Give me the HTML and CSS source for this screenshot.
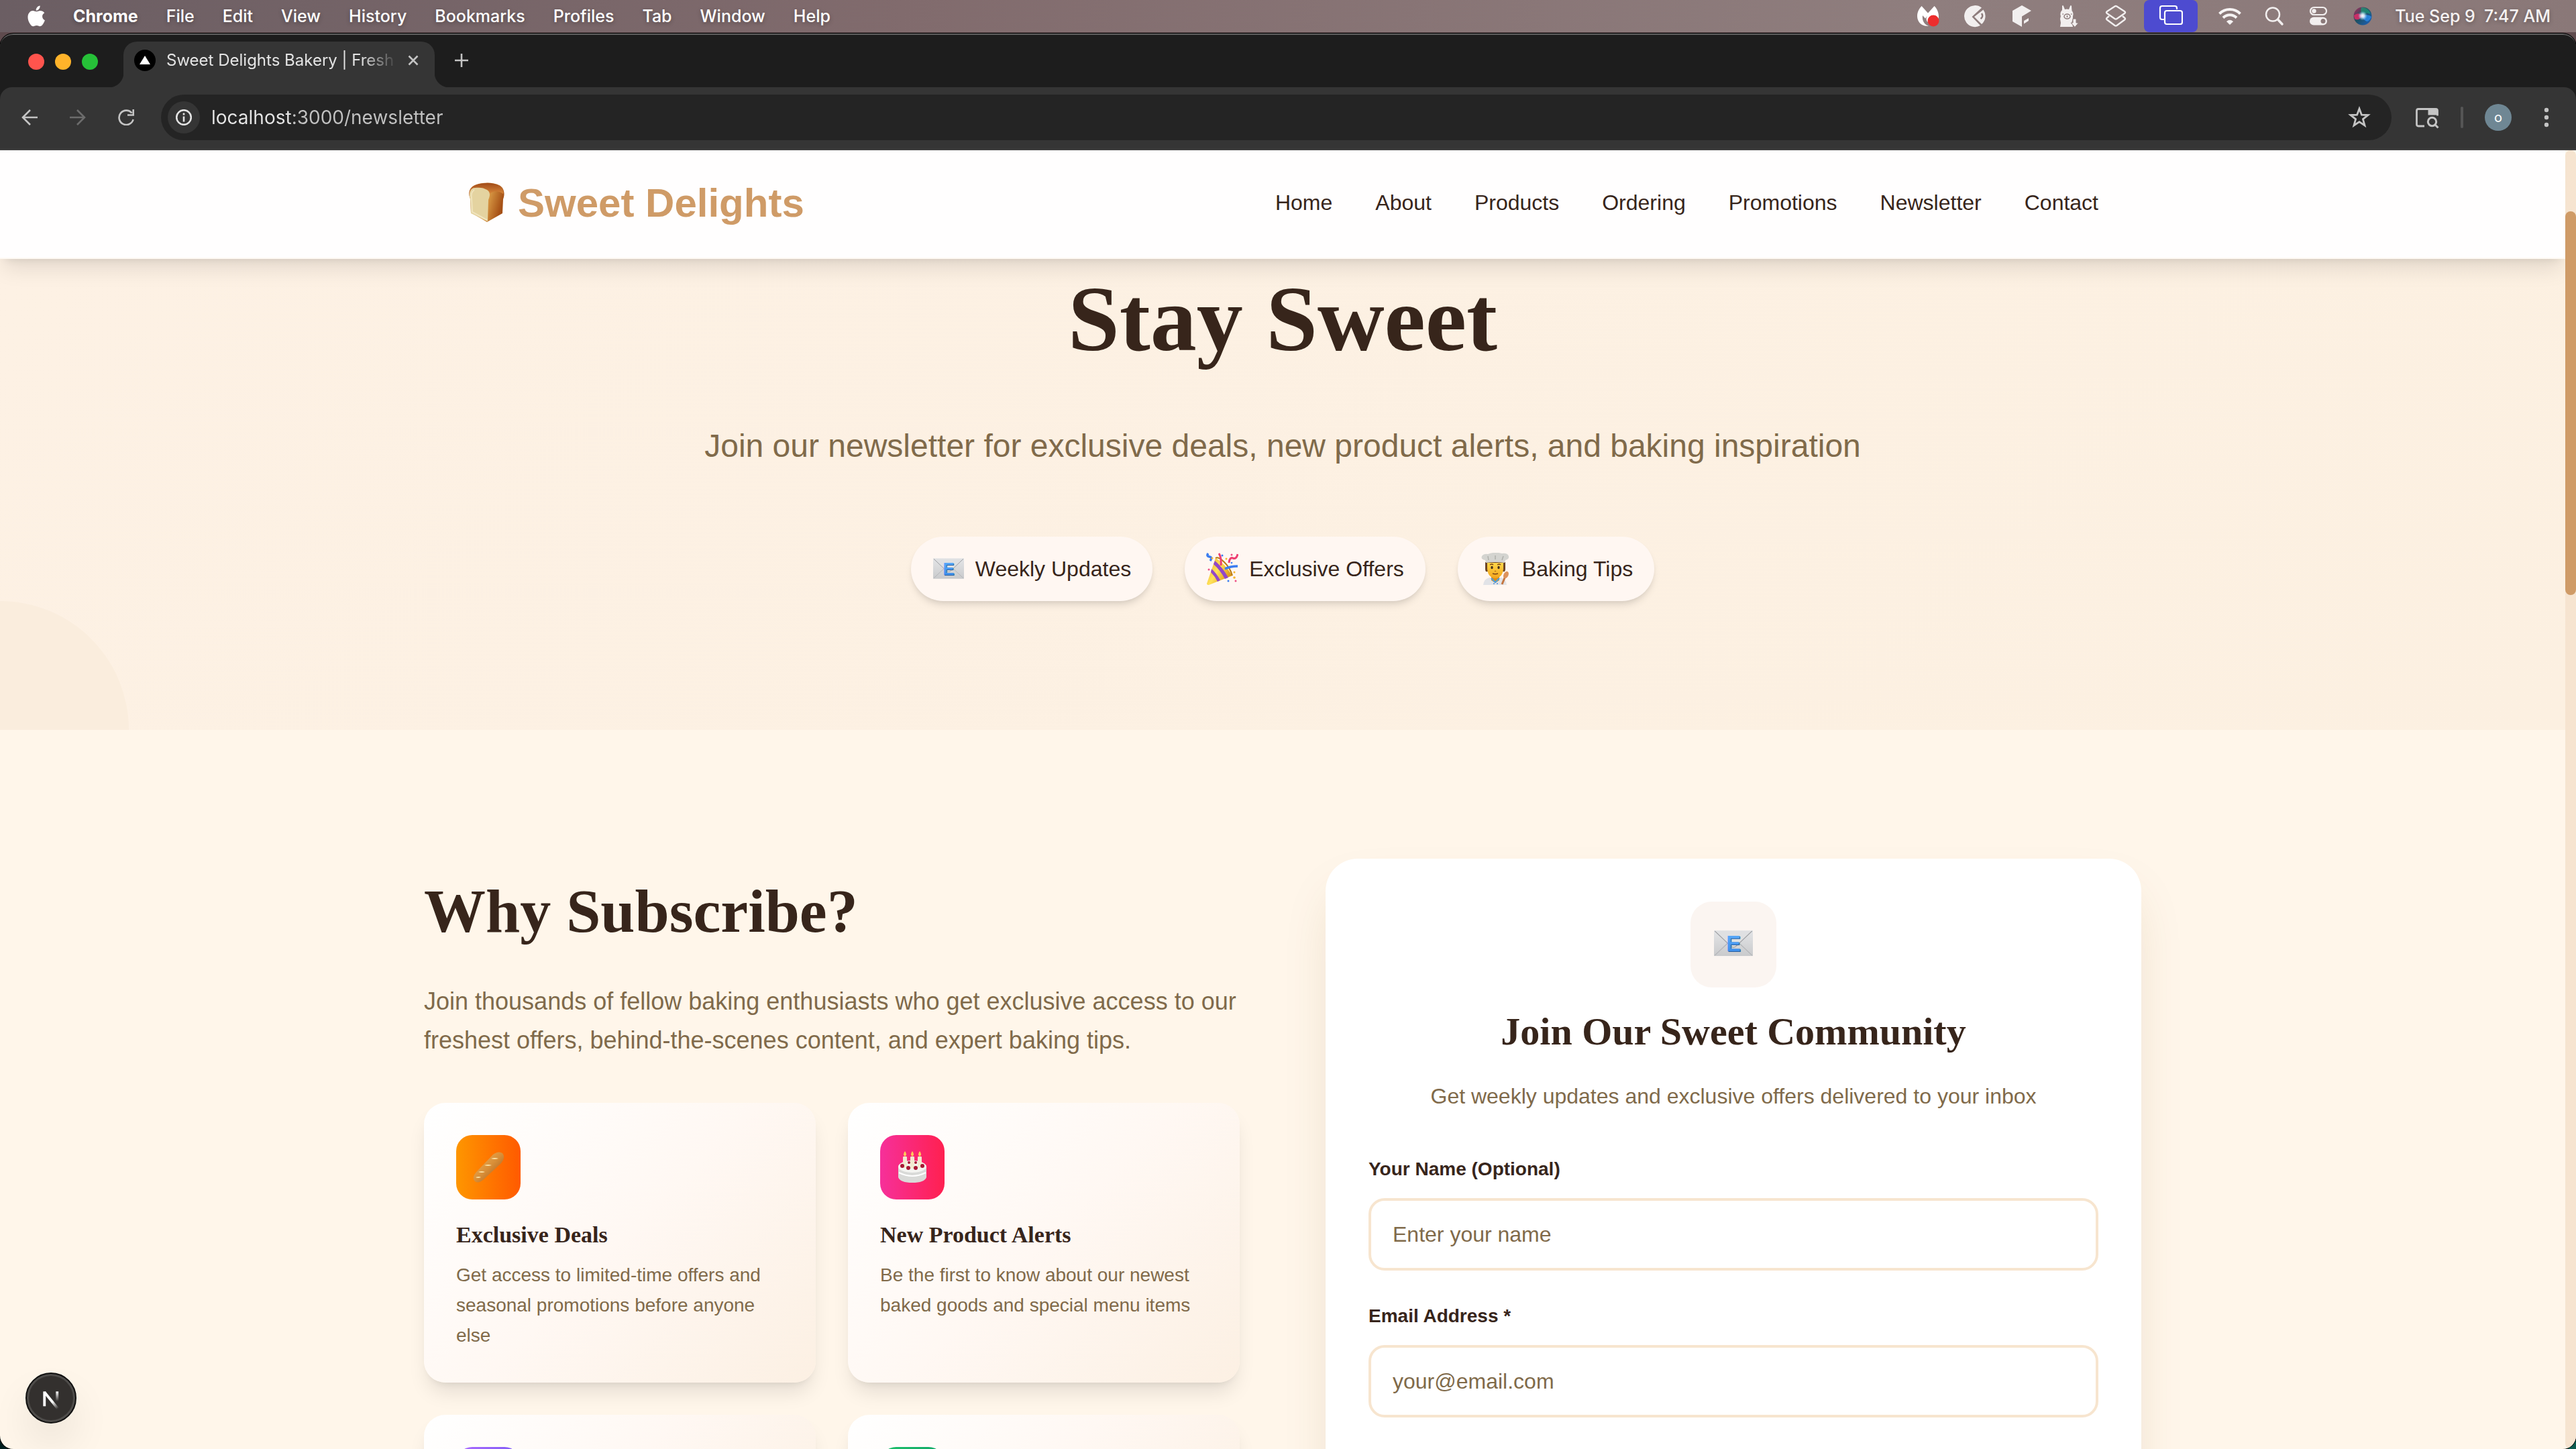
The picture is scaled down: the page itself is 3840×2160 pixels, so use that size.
FILE: index.html
```html
<!DOCTYPE html>
<html lang="en">
<head>
<meta charset="utf-8">
<meta name="viewport" content="width=device-width, initial-scale=1">
<title>Sweet Delights Bakery</title>
<link rel="stylesheet" href="styles.css">
</head>
<body>
<svg class="sprite" aria-hidden="true">
  <defs>
    <linearGradient id="env-paper" x1="0" y1="0" x2="0" y2="1"><stop offset="0" stop-color="#e4e5e7"/><stop offset="1" stop-color="#c9cacc"/></linearGradient>
    <linearGradient id="env-letter" x1="0" y1="0" x2="0" y2="1"><stop offset="0" stop-color="#5eaefc"/><stop offset="1" stop-color="#3787e6"/></linearGradient>
    <symbol id="email" viewBox="0 0 48 32">
      <rect width="48" height="32" rx="1" fill="url(#env-paper)"/>
      <path d="M1 31 18 15M47 31 30 15" stroke="#b4b5b8" fill="none"/>
      <path d="M1 1 20 19q4 4 8 0L47 1" stroke="#9c9da1" fill="#dfe0e2"/>
      <text x="16" y="27" class="email-letter email-letter-shade">E</text>
      <text x="15" y="26" class="email-letter">E</text>
    </symbol>
  </defs>
</svg>

<header class="menubar">
  <nav class="menus" aria-label="Menu bar">
    <svg class="apple" viewBox="0 0 26 32" fill="#fff"><path d="M18.600.5c.3 2.200-.6 4-1.700 5.300-1.100 1.300-2.600 2-4.200 1.900-.2-2 .6-3.800 1.700-5C15.500 1.400 17.200.6 18.600.5zM25.300 11.200c-2.100 1.300-3.300 3-3.200 5.400.1 2.800 1.500 4.700 3.800 5.700-.6 1.900-1.500 3.800-2.700 5.500-1.200 1.800-2.600 3.400-4.700 3.400-1.900 0-2.600-1.200-4.900-1.200s-3.100 1.200-5 1.200c-2 0-3.600-1.800-4.900-3.800C.500 23.300-.9 15.700 2.200 11.400 3.600 9.200 5.800 8 8 8c2.200 0 3.600 1.300 5.400 1.300C15.200 9.300 16.300 8 19 8c2.300 0 4.700 1.200 6.300 3.200z"/></svg>
    <a href="#" class="menu app">Chrome</a>
    <a href="#" class="menu">File</a>
    <a href="#" class="menu">Edit</a>
    <a href="#" class="menu">View</a>
    <a href="#" class="menu">History</a>
    <a href="#" class="menu">Bookmarks</a>
    <a href="#" class="menu">Profiles</a>
    <a href="#" class="menu">Tab</a>
    <a href="#" class="menu">Window</a>
    <a href="#" class="menu">Help</a>
  </nav>
  <div class="status">
    <div class="status-apps">
      <svg class="status-icon" viewBox="0 0 36 36"><path fill="#fff" d="M8.500 3 18 13.500 27.500 3c4 4 6.500 9.500 6.500 15.500 0 3-1 6-2 8H17c-2-3-2-6 0-9l-3 4-4-4.500C9 24 12 31 19 32.500 9 34 2 27 2 18 2 12 5 6.500 8.500 3z"/><circle cx="26" cy="25" r="8.500" fill="#ec2d2d"/></svg>
      <svg class="status-icon" viewBox="0 0 36 36"><g fill="#f2efef"><path d="M28 5.600 13.500 19 26 32A16 16 0 1 1 28 5.600z"/><path d="M30.500 8.500a16 16 0 0 1-2.500 21.500L17 19z"/></g><path d="M28 14c2 3 1.500 6-1.500 8" fill="none" stroke="#8b7a7a" stroke-width="2.500"/></svg>
      <svg class="status-icon" viewBox="0 0 36 36" fill="#f2efef"><path d="M18 2 32 10 18 18.500V34L4 26V10z"/><path d="M21 25l7-4v4l-7 4.500z"/></svg>
      <svg class="status-icon" viewBox="0 0 36 36" fill="#f2efef"><path d="M8 9 8 3q1-2 2 0l2 5q3-1 6 0l2-5q1-2 2 0l.5 7q3 3 1.500 8 0 6-1.500 8L24 34H5l1-6-1-6 1-4q-2-5 2-9z"/><ellipse cx="15.500" cy="18.500" rx="4.500" ry="3.500" fill="none" stroke="#8b7a7a" stroke-width="1.500"/><path d="M15.500 17v3M8.500 15h1.500M21 15h1.500" stroke="#8b7a7a" stroke-width="1.500"/><path d="M24 22h5v6h3.500L27 34.500 21 28h3z" stroke="#8b7a7a" stroke-width="1"/></svg>
      <svg class="status-icon" viewBox="0 0 36 36" fill="none" stroke="#f2efef" stroke-width="2.500" stroke-linejoin="round"><path d="M16.500 3.500q1.500-1 3 0L31 11q2 1.500 0 3L19.500 22q-1.500 1-3 0L5 14q-2-1.500 0-3z"/><path d="M8 18 5 20.500q-2 1.500 0 3L16.500 32q1.500 1 3 0L31 23.500q2-1.500 0-3L28 18"/></svg>
      <span class="mirroring"><svg class="status-icon" viewBox="0 0 36 36" fill="none" stroke="#fff" stroke-width="2.200"><path d="M8 23H5q-3 0-3-3V6q0-3 3-3h19q3 0 3 3v2"/><rect x="9" y="10" width="26" height="20" rx="3"/></svg></span>
    </div>
    <div class="status-system">
      <svg class="status-icon" viewBox="0 0 36 36" fill="none" stroke="#f7f4f4" stroke-width="4"><path d="M2.500 14.500a22 22 0 0 1 31 0"/><path d="M8 20.500a14 14 0 0 1 20 0"/><path d="M18 30.500 13.500 26q4.500-3.500 9 0z" fill="#f7f4f4" stroke-width="1"/></svg>
      <svg class="status-icon" viewBox="0 0 36 36" fill="none" stroke="#f2efef" stroke-width="2.500" stroke-linecap="round"><circle cx="16" cy="15.500" r="10"/><path d="m23.500 23 6.500 7" stroke-width="3.500"/></svg>
      <svg class="status-icon" viewBox="0 0 36 36"><rect x="6" y="5" width="24" height="11" rx="5.500" fill="none" stroke="#f2efef" stroke-width="2.200"/><circle cx="11.500" cy="10.500" r="3.200" fill="#f2efef"/><rect x="5" y="19.500" width="26" height="12" rx="6" fill="#f2efef"/><circle cx="25" cy="25.500" r="3.500" fill="#8b7a7a"/></svg>
      <svg class="status-icon" viewBox="0 0 36 36"><defs><linearGradient id="siri-base" x1="0" y1="0" x2="1" y2="1"><stop offset="0" stop-color="#b8265b"/><stop offset=".45" stop-color="#1d5060"/><stop offset="1" stop-color="#1d62c4"/></linearGradient><radialGradient id="siri-glow"><stop offset="0" stop-color="#fff"/><stop offset=".4" stop-color="#e9f3ff" stop-opacity=".8"/><stop offset="1" stop-color="#8cf" stop-opacity="0"/></radialGradient></defs><circle cx="18" cy="18" r="13.500" fill="url(#siri-base)"/><path d="M18 5a13 13 0 0 1 12 10q-8-4-12 2-4-6-2-12z" fill="#1d9b78" opacity=".7"/><path d="M5 17q7-6 12 1-5 8-11 4z" fill="#ec2768" opacity=".8"/><path d="M18 18q8-4 13 1-3 7-7 7-5-2-6-8z" fill="#298bea" opacity=".8"/><circle cx="18" cy="17.500" r="7" fill="url(#siri-glow)"/></svg>
      <time class="clock">Tue Sep 9&nbsp; 7:47 AM</time>
    </div>
  </div>
</header>

<div class="window">
  <div class="tabstrip">
    <div class="lights"><button class="light close" aria-label="Close window"></button><button class="light minimize" aria-label="Minimize window"></button><button class="light maximize" aria-label="Zoom window"></button></div>
    <div class="tab">
      <svg class="favicon" viewBox="0 0 32 32"><circle cx="16" cy="16" r="16"/><path d="M16 9 24 22H8z" fill="#fff"/></svg>
      <span class="tab-title">Sweet Delights Bakery | Fresh</span>
      <button class="plain" aria-label="Close tab"><svg class="glyph" viewBox="0 0 24 24"><path d="m5.500 5.500 13 13m0-13-13 13"/></svg></button>
    </div>
    <button class="plain" aria-label="New tab"><svg class="glyph" viewBox="0 0 24 24"><path d="M12 2v20M2 12h20"/></svg></button>
  </div>
  <div class="toolbar">
    <div class="history">
      <button class="plain" aria-label="Back"><svg class="glyph" viewBox="0 0 24 24"><path d="M24 12H2M13 1 2 12l11 11"/></svg></button>
      <button class="plain dim" aria-label="Forward" disabled><svg class="glyph" viewBox="0 0 24 24"><path d="M0 12h22M11 1l11 11-11 11"/></svg></button>
      <button class="plain" aria-label="Reload"><svg class="glyph" viewBox="0 0 24 24"><path d="M20.500 5.500A10.700 10.700 0 1 0 22.600 15M22.700 0v8.500H14"/></svg></button>
    </div>
    <div class="omnibox">
      <button class="site-info" aria-label="Site information"><svg class="glyph" viewBox="0 0 24 24"><circle cx="12" cy="12" r="10.800"/><path d="M12 10.500v8M12 5.500v3"/></svg></button>
      <input class="url" type="text" value="localhost:3000/newsletter" aria-label="Address">
      <button class="plain" aria-label="Bookmark this page"><svg class="tool-icon" viewBox="0 0 36 36"><path d="M18 5 21.400 14.200 31 14.500 23.400 20.600 26 30 18 24.600 10 30 12.600 20.600 5 14.500 14.600 14.200z"/></svg></button>
    </div>
    <button class="plain" aria-label="Search tabs"><svg class="tool-icon" viewBox="0 0 36 36"><path d="M14 31H5q-2.500 0-2.500-2.500V8Q2.500 5.500 5 5.500h26q2.500 0 2.500 2.500v7.500"/><path d="M19.500 5h14v9.500h-14z" fill="currentColor" stroke="none"/><circle cx="25.500" cy="24.500" r="6.200" stroke-width="3"/><path d="m30 29 4.500 4.500" stroke-width="3"/></svg></button>
    <span class="divider"></span>
    <button class="avatar" aria-label="Profile">o</button>
    <button class="plain" aria-label="Browser menu"><svg class="tool-icon" viewBox="0 0 36 36"><g fill="currentColor" stroke="none"><circle cx="18" cy="7" r="3.200"/><circle cx="18" cy="18" r="3.200"/><circle cx="18" cy="29" r="3.200"/></g></svg></button>
  </div>

  <div class="viewport">
    <div class="page">
      <header class="site-header">
        <div class="container site-bar">
          <a class="logo" href="#">
            <svg class="bread" viewBox="0 0 54 60"><defs><linearGradient id="crust" x1="0" y1="0" x2="1" y2=".3"><stop offset="0" stop-color="#b55b1e"/><stop offset=".6" stop-color="#d99a45"/><stop offset="1" stop-color="#a65116"/></linearGradient><linearGradient id="top-crust" x1="0" y1="0" x2="0" y2="1"><stop offset="0" stop-color="#a04a18"/><stop offset="1" stop-color="#dc8b3c"/></linearGradient></defs><path d="M28 59 4 45 3 24C-1 16 2 7 10 4 22-1 38 0 46 4c8 4 9 13 6 21l-1 21z" fill="url(#crust)"/><path d="M3 18C2 9 7 4 14 3 28-1 40 1 47 5c5 3 6 8 5 12-7-5-15-5-21 1z" fill="url(#top-crust)"/><path d="M29 58 4 46 3 25C0 16 3 8 10 8c8-1 13 0 18 3 6 4 4 10 2 15z" fill="#e4d3a0"/><path d="M28 56 6 44 5 25q-2-10 4-14" stroke="#f0e4bd" stroke-width="2" fill="none"/></svg>
            Sweet Delights
          </a>
          <nav class="site-nav" aria-label="Main">
            <a href="#">Home</a><a href="#">About</a><a href="#">Products</a><a href="#">Ordering</a><a href="#">Promotions</a><a href="#">Newsletter</a><a href="#">Contact</a>
          </nav>
        </div>
      </header>

      <section class="hero">
        <h1>Stay Sweet</h1>
        <p>Join our newsletter for exclusive deals, new product alerts, and baking inspiration</p>
        <ul class="pills">
          <li><svg class="emoji" viewBox="0 0 48 48"><use href="#email" x="1" y="8" width="46" height="31"/></svg>Weekly Updates</li>
          <li><svg class="emoji" viewBox="0 0 48 48">
            <defs><linearGradient id="cone" x1="0" y1="0" x2="1" y2=".6"><stop offset="0" stop-color="#e9a81e"/><stop offset=".5" stop-color="#ffe25a"/><stop offset="1" stop-color="#d8900f"/></linearGradient></defs>
            <path d="M1 46 14 8q12 6 25 26L4 48q-3 0-3-2z" fill="url(#cone)"/>
            <path d="M11 17q10 9 17 22l5-2Q24 21 13 12zM7 29q6 6 10 14l4-2Q15 30 8 24z" fill="#9247c8"/>
            <path d="M14 8q4-3 13 6t12 20" fill="none" stroke="#b87a10" stroke-width="2"/>
            <path d="M3 1q-3 4 2 5t1 6M28 24q8-4 19-4" fill="none" stroke="#3b7df0" stroke-width="3.500"/>
            <path d="M19 1q4 6 3 18M47 2q-2 8-7 6t-6 7" fill="none" stroke="#ee3f72" stroke-width="3"/>
            <g fill="#ee4f86"><circle cx="38" cy="3" r="1.500"/><circle cx="44" cy="42" r="1.500"/><circle cx="4" cy="25" r="1.500"/></g><g fill="#f5b62f"><circle cx="30" cy="9" r="1.500"/><circle cx="42" cy="29" r="1.500"/><circle cx="42" cy="37" r="1.800"/><circle cx="9" cy="8" r="1.500"/></g><g fill="#3b7df0"><circle cx="24" cy="4" r="1.500"/><circle cx="33" cy="42" r="1.500"/><circle cx="38" cy="15" r="1.300"/></g>
          </svg>Exclusive Offers</li>
          <li><svg class="emoji" viewBox="0 0 48 48">
            <defs><linearGradient id="skin" x1="0" y1="0" x2="0" y2="1"><stop offset="0" stop-color="#ffd84a"/><stop offset="1" stop-color="#f3a51c"/></linearGradient></defs>
            <path d="M6 48q1-9 9-11h18q7 2 8 11z" fill="#e2e3e7"/><path d="M18 36h12v5l-6 4-6-4z" fill="#d98e1b"/><path d="m18 38 6 6 6-6" fill="none" stroke="#4b9fe3" stroke-width="2"/>
            <path d="M9 14h30v10q0 5-3 4H12q-3 1-3-4z" fill="#6d4526"/><path d="M12 15h24v9q-1 13-12 14Q13 37 12 24z" fill="url(#skin)"/>
            <path d="M10 15 9 11Q2 10 4 5q3-4 9-3 10-4 21-1 8-1 10 4 1 5-5 6l-1 4q-14-2-28 0z" fill="#d4d4d0"/><path d="M14 11 13 5m11 5V4m10 7 2-6" stroke="#b0b0ab" stroke-width="1.500"/>
            <g fill="#43301c"><ellipse cx="19" cy="22" rx="1.700" ry="2.300"/><ellipse cx="29" cy="22" rx="1.700" ry="2.300"/></g><path d="M16 18q3-2 5 0m6 0q3-2 5 0M20 31q4 1.500 8 0" fill="none" stroke="#7c4514" stroke-width="1.500"/><path d="M23 27q1 1 2 0" fill="none" stroke="#b9741b" stroke-width="1.500"/>
            <path d="m34 47 5-12" stroke="#c57640" stroke-width="3"/><ellipse cx="40" cy="33" rx="3.500" ry="5.500" fill="#dd935c" transform="rotate(25 40 33)"/><circle cx="22" cy="46" r="1" fill="#5b8fd0"/><circle cx="27" cy="46" r="1" fill="#5b8fd0"/>
          </svg>Baking Tips</li>
        </ul>
      </section>

      <section class="container subscribe">
        <div class="benefits">
          <h2>Why Subscribe?</h2>
          <p class="lead">Join thousands of fellow baking enthusiasts who get exclusive access to our freshest offers, behind-the-scenes content, and expert baking tips.</p>
          <div class="cards">
            <article class="card">
              <span class="badge orange"><svg class="emoji" viewBox="0 0 48 48"><defs><linearGradient id="loaf" x1="0" y1="0" x2="1" y2="1"><stop offset="0" stop-color="#f2b860"/><stop offset=".5" stop-color="#d98f38"/><stop offset="1" stop-color="#96501a"/></linearGradient></defs><path d="M3 44Q-1 38 8 29L31 5q8-6 14-2 5 6-2 15L17 42q-9 8-14 2z" fill="url(#loaf)"/><path d="M9 31q5-2 10 0-5 2-10 0zM18 21q6-2 11 0-6 2-11 0zM28 11q6-2 11 0-6 2-11 0zM5 39q5-2 8 0-5 2-8 0z" fill="#fbe0a3"/></svg></span>
              <h3>Exclusive Deals</h3>
              <p>Get access to limited-time offers and seasonal promotions before anyone else</p>
            </article>
            <article class="card">
              <span class="badge pink"><svg class="emoji" viewBox="0 0 48 48"><path d="M3 23v16q3 8 21 8t21-8V23z" fill="#d9dad8"/><ellipse cx="24" cy="23" rx="21" ry="9" fill="#f4f4f1"/><path d="M4 32q20 10 40 0" stroke="#fff" stroke-width="2" fill="none"/><g fill="#f1ead0"><rect x="10" y="8" width="6" height="17" rx="1"/><rect x="21" y="8" width="6" height="18" rx="1"/><rect x="32" y="8" width="6" height="17" rx="1"/></g><g fill="#a81834"><circle cx="9" cy="22" r="3"/><circle cx="18" cy="25" r="3"/><circle cx="29" cy="25" r="3"/><circle cx="39" cy="22" r="3"/><circle cx="19" cy="17" r="2"/><circle cx="29" cy="17" r="2"/></g><g fill="#ffc95a"><path d="M13 0q4 5 0 8-4-3 0-8zM24 0q4 5 0 8-4-3 0-8zM35 0q4 5 0 8-4-3 0-8z"/></g></svg></span>
              <h3>New Product Alerts</h3>
              <p>Be the first to know about our newest baked goods and special menu items</p>
            </article>
            <article class="card"><span class="badge violet"></span></article>
            <article class="card"><span class="badge green"></span></article>
          </div>
        </div>

        <form class="signup">
          <span class="signup-icon"><svg class="signup-email" viewBox="0 0 48 32"><use href="#email" width="48" height="32"/></svg></span>
          <h2>Join Our Sweet Community</h2>
          <p>Get weekly updates and exclusive offers delivered to your inbox</p>
          <div class="field"><label for="name">Your Name (Optional)</label><input id="name" type="text" placeholder="Enter your name"></div>
          <div class="field"><label for="email-field">Email Address *</label><input id="email-field" type="email" placeholder="your@email.com"></div>
        </form>
      </section>
    </div>
    <div class="scrollbar"><span class="thumb"></span></div>
    <button class="devtools" aria-label="Open Next.js Dev Tools"><svg viewBox="0 0 74 74"><defs><linearGradient id="n-diag" gradientUnits="userSpaceOnUse" x1="40" y1="42" x2="48" y2="53"><stop offset="0" stop-color="#fff"/><stop offset="1" stop-color="#fff" stop-opacity="0"/></linearGradient><linearGradient id="n-bar" gradientUnits="userSpaceOnUse" x1="0" y1="27" x2="0" y2="42"><stop offset="0" stop-color="#fff"/><stop offset="1" stop-color="#fff" stop-opacity="0"/></linearGradient></defs><path d="M27 49.500V27" stroke="#fff" stroke-width="4"/><path d="M27 28 48 54" stroke="url(#n-diag)" stroke-width="4"/><rect x="44.500" y="27" width="4" height="16" fill="url(#n-bar)"/></svg></button>
  </div>
</div>
</body>
</html>
```

FILE: styles.css
```css
:root {
  --ink: #37251b;
  --muted: #806a4a;
  --caramel: #cf9b67;
  --cream: #fff6ea;
  --blush: #fff7f2;
  --sand: #f6e4d0;
  --chrome: #353535;
  --sans: "Liberation Sans", Arial, sans-serif;
  --serif: "Liberation Serif", "Times New Roman", serif;
  --ui: Inter, sans-serif;
}

* { box-sizing: border-box; }
h1, h2, h3, p, ul { margin: 0; padding: 0; }
a { color: inherit; text-decoration: none; }
button, input { font: inherit; color: inherit; border: 0; margin: 0; padding: 0; background: none; }
svg { display: block; flex: none; }

body {
  margin: 0;
  height: 100vh;
  overflow: hidden;
  display: flex;
  flex-direction: column;
  font-family: var(--sans);
  color: var(--ink);
  background: linear-gradient(#5f4b4e, #5f4b4e) top / 100% 80px no-repeat, linear-gradient(90deg, #001f1f, #0c5c50);
}
.sprite { position: absolute; width: 0; height: 0; }
.email-letter { font: bold 27px var(--sans); fill: url(#env-letter); }
.email-letter-shade { fill: #2a5f9e; }

/* System menu bar */
.menubar {
  flex: none;
  height: 48px;
  padding: 0 38px 0 41px;
  display: flex;
  align-items: center;
  justify-content: space-between;
  background: linear-gradient(90deg, #6b5e63, #816b6d 35%, #8f7e7e 75%, #8a7878);
  font: 500 25px/48px var(--ui);
  color: #fff;
  text-shadow: 0 2px 6px rgb(0 0 0 / .3);
}
.menus, .status, .status-apps, .status-system { display: flex; align-items: center; }
.menus { gap: 42px; }
.apple { width: 26px; height: 32px; }
.app { font-weight: 700; }
.status { gap: 30px; color: #f5f2f2; }
.status-apps { gap: 34px; }
.status-system { gap: 30px; }
.status-icon { width: 36px; height: 36px; }
.mirroring {
  width: 80px;
  height: 48px;
  margin-left: -10px;
  display: grid;
  place-items: center;
  border-radius: 8px;
  background: #4d4bd0;
}

/* Browser window */
.window {
  flex: 1;
  min-height: 0;
  margin-top: 2px;
  display: flex;
  flex-direction: column;
  border-radius: 20px;
  overflow: hidden;
  background: #1d1d1d;
  box-shadow: 0 0 0 1px #000;
}
.plain { display: grid; place-items: center; color: #c4c4c4; }
.glyph { width: 24px; height: 24px; fill: none; stroke: currentColor; stroke-width: 2.600; }
.tool-icon { width: 36px; height: 36px; fill: none; stroke: currentColor; stroke-width: 2.800; }
.dim { color: #6c6c6c; }

.tabstrip {
  flex: none;
  height: 80px;
  padding: 10px 0 0 42px;
  display: flex;
  align-items: center;
  border-top: 2px solid #5e5e5e;
  border-radius: 20px 20px 0 0;
}
.lights { display: flex; gap: 16px; margin: -8px 38px 0 0; }
.light { width: 24px; height: 24px; border-radius: 50%; }
.close { background: #ff544d; }
.minimize { background: #ffb32a; }
.maximize { background: #26c138; }
.tab {
  position: relative;
  align-self: stretch;
  width: 464px;
  margin-right: 28px;
  padding: 0 20px 12px 16px;
  display: flex;
  align-items: center;
  border-radius: 20px 20px 0 0;
  background: var(--chrome);
}
.tab::before, .tab::after {
  content: "";
  position: absolute;
  bottom: 0;
  width: 22px;
  height: 22px;
}
.tab::before { right: 100%; background: radial-gradient(circle at 0 0, transparent 22px, var(--chrome) 23px); }
.tab::after { left: 100%; background: radial-gradient(circle at 100% 0, transparent 22px, var(--chrome) 23px); }
.tab + .plain { margin-top: -12px; }
.favicon { width: 32px; height: 32px; margin-right: 16px; }
.tab-title {
  flex: 1;
  margin-right: 12px;
  overflow: hidden;
  white-space: nowrap;
  font: 24px/32px var(--ui);
  color: #e3e3e3;
  -webkit-mask: linear-gradient(90deg, #000 290px, transparent 345px);
  mask: linear-gradient(90deg, #000 290px, transparent 345px);
}

.toolbar {
  flex: none;
  height: 94px;
  padding: 0 26px 2px 32px;
  display: flex;
  align-items: center;
  background: var(--chrome);
  border-bottom: 2px solid #3f3f3f;
  border-radius: 18px 18px 0 0;
}
.history { display: flex; gap: 48px; margin-right: 40px; }
.omnibox {
  flex: 1;
  height: 68px;
  margin-right: 35px;
  padding: 0 30px 0 10px;
  display: flex;
  align-items: center;
  border-radius: 34px;
  background: #242424;
}
.site-info {
  width: 48px;
  height: 48px;
  display: grid;
  place-items: center;
  border-radius: 50%;
  background: var(--chrome);
  color: #e3e3e3;
}
.url {
  flex: 1;
  margin-left: 17px;
  height: 48px;
  font: 28px/48px var(--ui);
  color: transparent;
  background: linear-gradient(90deg, #e6e6e6 122px, #c2c2c2 122px);
  -webkit-background-clip: text;
  background-clip: text;
}
.divider { width: 4px; height: 32px; margin: 0 32px; border-radius: 2px; background: #555; }
.avatar {
  width: 40px;
  height: 40px;
  margin-right: 34px;
  border-radius: 50%;
  background: #6f8794;
  color: #fff;
  font: 20px/40px var(--ui);
  text-align: center;
}

/* Web page */
.viewport { position: relative; flex: 1; min-height: 0; display: flex; background: var(--cream); }
.page { flex: 1; min-width: 0; overflow: hidden; }
.scrollbar { width: 16px; padding-top: 91px; border-radius: 8px; background: var(--sand); }
.thumb { display: block; height: 31%; border-radius: 8px; background: var(--caramel); }
.container { max-width: 2560px; margin: 0 auto; }

.site-header {
  position: relative;
  z-index: 1;
  background: #fffefe;
  border-bottom: 2px solid #fffaf4;
  box-shadow: 0 20px 30px -6px rgb(0 0 0 / .1), 0 8px 12px -8px rgb(0 0 0 / .1);
}
.site-bar {
  height: 160px;
  padding: 0 64px 4px;
  display: flex;
  align-items: center;
  justify-content: space-between;
}
.logo { display: flex; align-items: center; gap: 20px; font-size: 60px; font-weight: bold; color: var(--caramel); }
.bread { width: 54px; height: 60px; margin-left: 2px; }
.site-nav { display: flex; gap: 64px; font-size: 32px; }

.hero {
  position: relative;
  overflow: hidden;
  padding: 2px 64px 192px;
  text-align: center;
  background: linear-gradient(135deg, #fdf1e4, #fcf0e1);
}
.hero::before {
  content: "";
  position: absolute;
  left: -192px;
  bottom: -192px;
  width: 384px;
  height: 384px;
  border-radius: 50%;
  background: #faeddd;
}
.hero h1 { font: bold 138px/176px var(--serif); margin-bottom: 62px; }
.hero p { font-size: 48px; line-height: 78px; color: var(--muted); margin-bottom: 96px; }
.pills { display: flex; justify-content: center; gap: 48px; list-style: none; }
.pills li {
  height: 96px;
  padding: 0 32px;
  display: flex;
  align-items: center;
  gap: 16px;
  border-radius: 48px;
  background: var(--blush);
  font-size: 32px;
  box-shadow: 0 8px 12px -2px rgb(0 0 0 / .1), 0 4px 8px -4px rgb(0 0 0 / .1);
}
.emoji { width: 48px; height: 48px; }

.subscribe {
  padding-top: 192px;
  display: grid;
  grid-template-columns: 1fr 1fr;
  gap: 128px;
}
.benefits h2 { font: bold 92px/156px var(--serif); margin-bottom: 28px; }
.lead { font-size: 36px; line-height: 58px; color: var(--muted); margin-bottom: 64px; }
.cards { display: grid; grid-template-columns: 1fr 1fr; gap: 48px; }
.card {
  padding: 48px;
  border-radius: 32px;
  background: linear-gradient(135deg, #fff, #fff8f3 50%, #fcf0e3);
  box-shadow: 0 20px 30px -6px rgb(0 0 0 / .1), 0 8px 12px -8px rgb(0 0 0 / .1);
}
.card h3 { font: bold 34px/54px var(--serif); margin: 26px 0 10px; }
.card p { font-size: 28px; line-height: 45px; color: var(--muted); }
.badge { width: 96px; height: 96px; display: grid; place-items: center; border-radius: 24px; }
.orange { background: linear-gradient(90deg, #fe9600, #ff5a00); }
.pink { background: linear-gradient(90deg, #f6309a, #ff2050); }
.violet { background: linear-gradient(90deg, #ad6bff, #7f5bf5); }
.green { background: linear-gradient(90deg, #1fc16b, #10a868); }

.signup {
  padding: 64px;
  border-radius: 48px;
  background: #fff;
  box-shadow: 0 40px 80px -20px rgb(120 80 20 / .18);
}
.signup-icon {
  width: 128px;
  height: 128px;
  margin: 0 auto 16px;
  display: grid;
  place-items: center;
  border-radius: 32px;
  background: #fbf5f1;
}
.signup-email { width: 58px; height: 40px; margin-bottom: 4px; }
.signup h2 { font: bold 58px/100px var(--serif); margin-bottom: 20px; text-align: center; }
.signup p { font-size: 32px; line-height: 52px; color: var(--muted); margin-bottom: 60px; text-align: center; }
.field { margin-bottom: 45px; }
.field label { display: block; margin-bottom: 20px; font-size: 28px; font-weight: bold; line-height: 46px; }
.field input {
  display: block;
  width: 100%;
  height: 108px;
  padding: 0 32px;
  border: 4px solid #f7e5cf;
  border-radius: 24px;
  font-size: 32px;
}
.field input::placeholder { color: var(--muted); opacity: 1; }

/* Floating dev tools button */
.devtools {
  position: absolute;
  left: 38px;
  bottom: 38px;
  width: 76px;
  height: 76px;
  border: 2px solid #111;
  border-radius: 50%;
  background: #33302e;
  box-shadow: inset 0 0 0 3px #4e4c4a, 0 32px 64px -8px rgb(0 0 0 / .12);
}
```
